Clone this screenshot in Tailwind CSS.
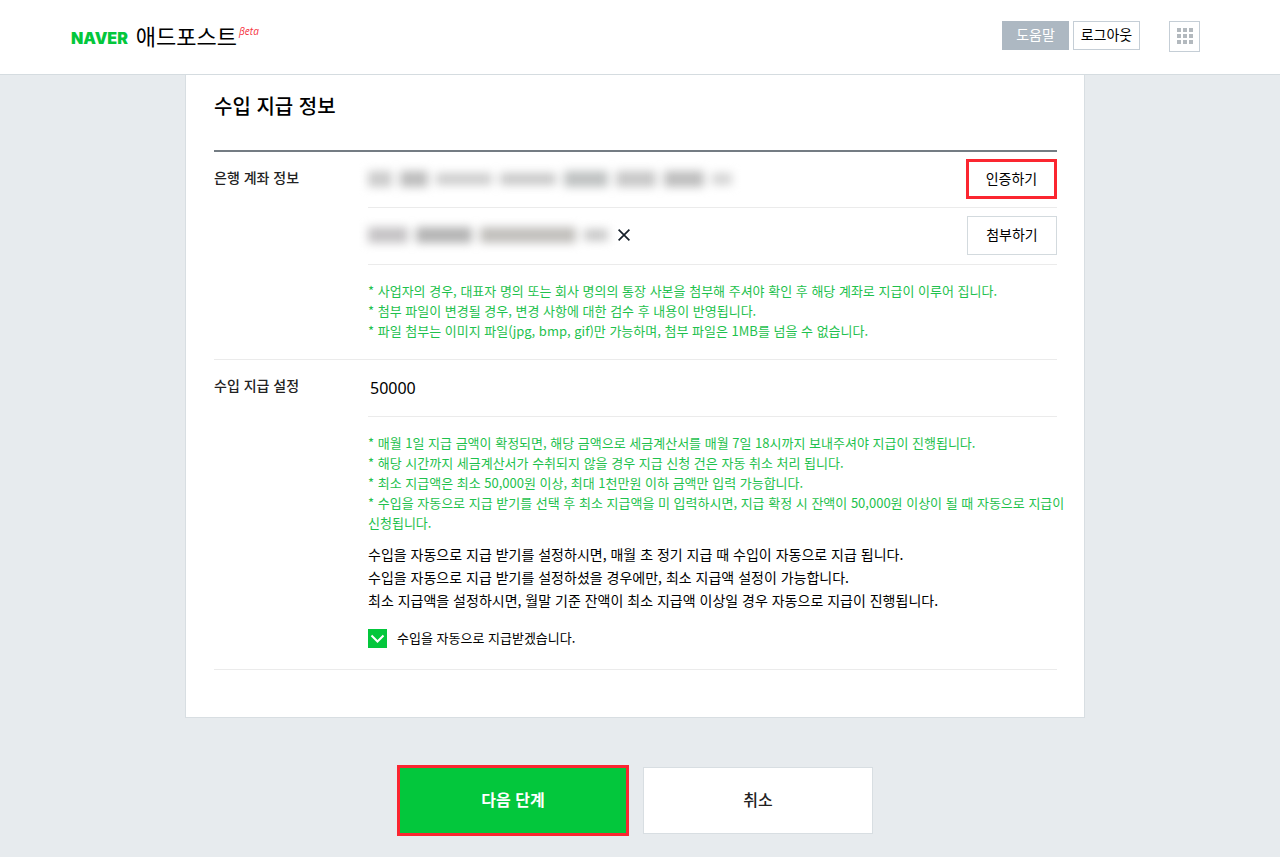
<!DOCTYPE html>
<html lang="ko">
<head>
    <meta charset="UTF-8">
    <meta name="viewport" content="width=device-width, initial-scale=1.0">
    <title>네이버 애드포스트</title>
    <script src="https://cdn.jsdelivr.net/npm/@tailwindcss/browser@4"></script>
</head>
<body class="min-h-screen bg-[#e7ebee] font-['Noto_Sans_CJK_KR',sans-serif] text-sm text-black">
    <header class="flex h-[75px] items-center justify-between border-b border-[#d5dce0] bg-white pr-20 pl-[71px]">
        <h1 class="flex items-center gap-2">
            <a href="#" class="pt-0.5 font-['Inter',sans-serif] text-base font-black text-[#03c73c]">NAVER</a>
            <a href="#" class="flex items-start gap-0.5 pb-1">
                <span class="text-[22px] leading-8">애드포스트</span>
                <span class="pt-1 font-['Open_Sans',sans-serif] text-[10px] leading-4 font-medium text-[#f5333f] italic">βeta</span>
            </a>
        </h1>
        <div class="flex items-start pb-0.5">
            <button type="button" class="h-[29px] w-[67px] bg-[#adb8c2] pb-0.5 text-white">도움말</button>
            <button type="button" class="ml-1 h-[29px] w-[67px] border border-[#c5ced6] bg-white pb-0.5">로그아웃</button>
            <button type="button" aria-label="서비스 더보기" class="ml-[29px] flex size-[31px] items-center justify-center border border-[#c5ced6] bg-white">
                <svg class="size-4" viewBox="0 0 16 16" fill="#b3b9be">
                    <path d="M0 0h4v4H0zM6 0h4v4H6zM12 0h4v4h-4zM0 6h4v4H0zM6 6h4v4H6zM12 6h4v4h-4zM0 12h4v4H0zM6 12h4v4H6zM12 12h4v4h-4z"/>
                </svg>
            </button>
        </div>
    </header>

    <main class="pr-[10px]">
        <form class="mx-auto max-w-[900px]" onsubmit="return false">
            <div class="border border-t-0 border-[#d8dee2] bg-white pr-[27px] pb-[47px] pl-7">
                <h2 class="border-b-2 border-[#747c83] pt-4 pb-[29px] text-xl leading-[30px] font-medium">수입 지급 정보</h2>

                <!-- 은행 계좌 -->
                <section class="flex border-b border-[#ebebeb] pb-[18px]">
                    <h3 class="w-[154px] shrink-0 pt-[15px] leading-5 font-medium text-[#222]">은행 계좌 정보</h3>
                    <div class="min-w-0 flex-1">
                        <div class="flex h-14 items-center justify-between border-b border-[#ebebeb] pb-0.5">
                            <div class="flex items-center gap-2 blur-[5px]" aria-hidden="true">
                                <span class="h-4 w-6 bg-[#cccccc]"></span>
                                <span class="h-4 w-7 bg-[#bdbdbd]"></span>
                                <span class="h-3 w-14 bg-[#cdcdcd]"></span>
                                <span class="h-3 w-14 bg-[#c8c8c8]"></span>
                                <span class="h-4 w-11 bg-[#bfc2c2]"></span>
                                <span class="h-4 w-10 bg-[#c8c8c8]"></span>
                                <span class="h-4 w-10 bg-[#bebebe]"></span>
                                <span class="h-3 w-5 bg-[#d4d4d4]"></span>
                            </div>
                            <button type="button" class="h-10 w-[91px] border-3 border-[#fb2630] bg-white pb-0.5">인증하기</button>
                        </div>
                        <div class="flex h-[57px] items-center justify-between border-b border-[#ebebeb] pb-0.5">
                            <div class="flex items-center gap-2">
                                <div class="flex items-center gap-2 blur-[5px]" aria-hidden="true">
                                    <span class="h-4 w-10 bg-[#c5c3c5]"></span>
                                    <span class="h-4 w-14 bg-[#b4b4b4]"></span>
                                    <span class="h-4 w-24 bg-[#c1bfbc]"></span>
                                    <span class="h-3 w-6 bg-[#c8c8c8]"></span>
                                </div>
                                <button type="button" aria-label="첨부 파일 삭제" class="flex size-4 items-center justify-center">
                                    <svg class="size-3" viewBox="0 0 12 12" fill="none" stroke="#17212b" stroke-width="1.7">
                                        <path d="M.6.6 11.4 11.4M11.4.6.6 11.4"/>
                                    </svg>
                                </button>
                            </div>
                            <button type="button" class="h-[39px] w-[90px] border border-[#d3dade] bg-white pb-0.5">첨부하기</button>
                        </div>
                        <ul class="-mr-3 pt-4 text-[13px] leading-5 break-keep text-[#1ec14d]">
                            <li>* 사업자의 경우, 대표자 명의 또는 회사 명의의 통장 사본을 첨부해 주셔야 확인 후 해당 계좌로 지급이 이루어 집니다.</li>
                            <li>* 첨부 파일이 변경될 경우, 변경 사항에 대한 검수 후 내용이 반영됩니다.</li>
                            <li>* 파일 첨부는 이미지 파일(jpg, bmp, gif)만 가능하며, 첨부 파일은 1MB를 넘을 수 없습니다.</li>
                        </ul>
                    </div>
                </section>

                <!-- 지급 설정 -->
                <section class="flex border-b border-[#ebebeb] pb-[21px]">
                    <h3 class="w-[154px] shrink-0 pt-[15px] leading-5 font-medium text-[#222]"><label for="amount">수입 지급 설정</label></h3>
                    <div class="min-w-0 flex-1">
                        <div class="flex h-[57px] items-center border-b border-[#ebebeb]">
                            <input type="text" id="amount" value="50000" class="w-full px-0.5 font-['Noto_Sans',sans-serif] text-base outline-none">
                        </div>
                        <ul class="-mr-3 pt-4 text-[13px] leading-5 break-keep text-[#1ec14d]">
                            <li>* 매월 1일 지급 금액이 확정되면, 해당 금액으로 세금계산서를 매월 7일 18시까지 보내주셔야 지급이 진행됩니다.</li>
                            <li>* 해당 시간까지 세금계산서가 수취되지 않을 경우 지급 신청 건은 자동 취소 처리 됩니다.</li>
                            <li>* 최소 지급액은 최소 50,000원 이상, 최대 1천만원 이하 금액만 입력 가능합니다.</li>
                            <li>* 수입을 자동으로 지급 받기를 선택 후 최소 지급액을 미 입력하시면, 지급 확정 시 잔액이 50,000원 이상이 될 때 자동으로 지급이 신청됩니다.</li>
                        </ul>
                        <div class="mt-[10px] leading-[23px] break-keep">
                            <p>수입을 자동으로 지급 받기를 설정하시면, 매월 초 정기 지급 때 수입이 자동으로 지급 됩니다.</p>
                            <p>수입을 자동으로 지급 받기를 설정하셨을 경우에만, 최소 지급액 설정이 가능합니다.</p>
                            <p>최소 지급액을 설정하시면, 월말 기준 잔액이 최소 지급액 이상일 경우 자동으로 지급이 진행됩니다.</p>
                        </div>
                        <div class="mt-[17px] flex h-[19px] items-center gap-[10px]">
                            <span class="relative size-[19px]">
                                <input type="checkbox" id="auto" checked class="peer block size-[19px] appearance-none border border-[#c5ced6] bg-white checked:border-[#03c73c] checked:bg-[#03c73c]">
                                <svg class="pointer-events-none absolute inset-0 hidden size-[19px] peer-checked:block" viewBox="0 0 19 19" fill="none" stroke="#fff" stroke-width="2">
                                    <path d="M3.5 6.5l6 6 6-6"/>
                                </svg>
                            </span>
                            <label for="auto" class="pb-0.5 text-[13px] leading-5">수입을 자동으로 지급받겠습니다.</label>
                        </div>
                    </div>
                </section>
            </div>

            <div class="flex items-center justify-center gap-[14px] pt-[47px] pb-5 text-base">
                <button type="submit" class="h-[71px] w-[232px] border-3 border-[#fb2630] bg-[#03c73c] pb-1 font-bold text-white">다음 단계</button>
                <button type="button" class="h-[67px] w-[230px] border border-[#d8dee2] bg-white pb-1 font-medium text-[#222]">취소</button>
            </div>
        </form>
    </main>
</body>
</html>
